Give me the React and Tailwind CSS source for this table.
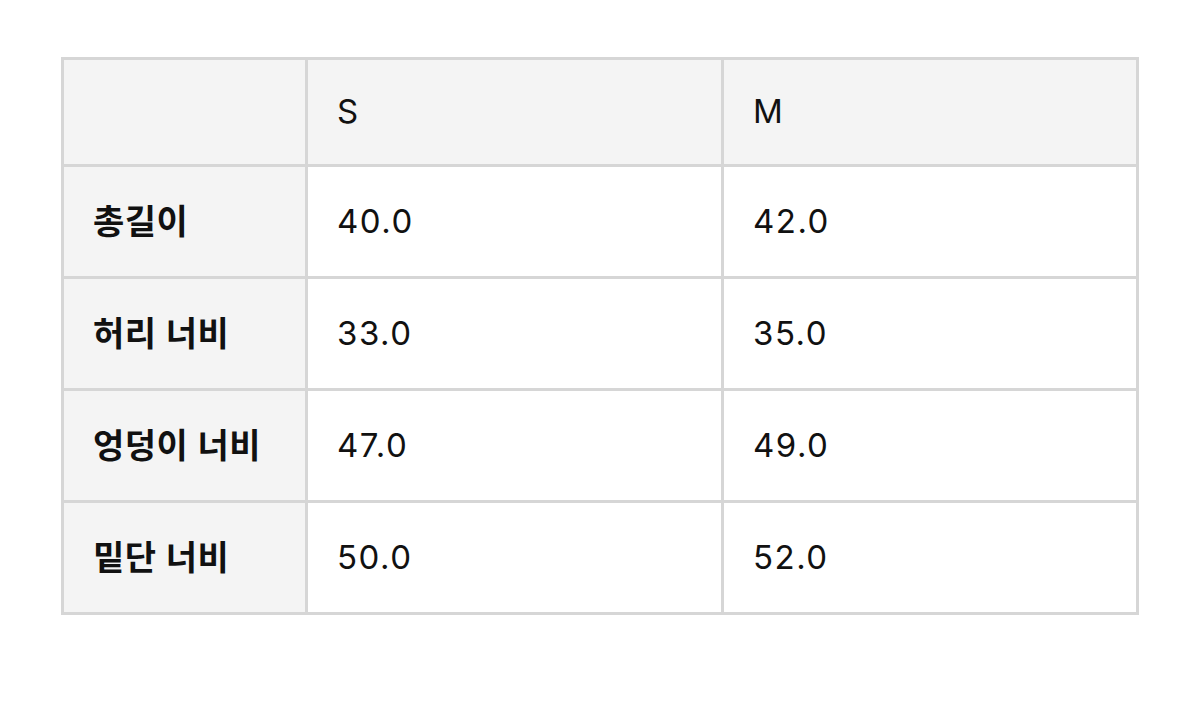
const rows = [
  { label: '총길이', s: '40.0', m: '42.0' },
  { label: '허리 너비', s: '33.0', m: '35.0' },
  { label: '엉덩이 너비', s: '47.0', m: '49.0' },
  { label: '밑단 너비', s: '50.0', m: '52.0' },
];

const font = { fontFamily: 'Inter, "Noto Sans CJK KR", sans-serif' };

function Cell({ head, children }) {
  return (
    <div
      className={
        'flex items-center pl-[29px] text-[33px] tracking-[1.5px] text-[#111] ' +
        (head ? 'bg-[#f4f4f4]' : 'bg-white')
      }
    >
      {children}
    </div>
  );
}

export default function App() {
  return (
    <div className="w-[1200px] h-[702px] bg-white pt-[57px] pl-[61px]" style={font}>
      <div className="grid grid-cols-[241px_413px_412px] grid-rows-[104px_109px_109px_109px_109px] gap-[3px] p-[3px] bg-[#d6d6d6] w-[1078px]">
        <div className="bg-[#f4f4f4]" />
        <Cell head>S</Cell>
        <Cell head>M</Cell>
        {rows.map((r) => (
          <div key={r.label} className="contents">
            <div className="flex items-center pl-[29px] bg-[#f4f4f4] text-[34px] font-semibold tracking-[0.5px] text-[#111]">
              {r.label}
            </div>
            <Cell>{r.s}</Cell>
            <Cell>{r.m}</Cell>
          </div>
        ))}
      </div>
    </div>
  );
}
